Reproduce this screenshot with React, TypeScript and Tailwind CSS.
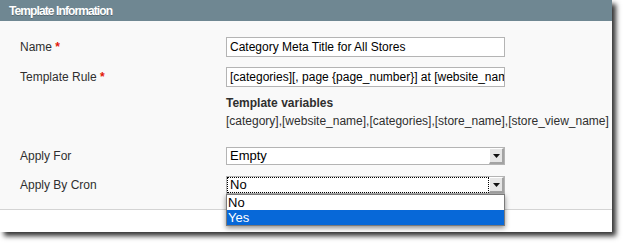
const Label = ({ text, required }: { text: string; required?: boolean }) => (
  <div className="w-[206px] shrink-0 text-[12px] text-[#2f2f2f]">
    {text}
    {required && <span className="font-bold text-[#e3170a]"> *</span>}
  </div>
);

const Arrow = () => (
  <div className="flex h-full w-[15px] shrink-0 items-center justify-center border-r-2 border-b-2 border-[#a3a3a3] bg-[#e6e6e6] border-l border-l-white border-t border-t-white">
    <svg width="7" height="4" viewBox="0 0 7 4">
      <path d="M0 0h7L3.5 4z" fill="#111" />
    </svg>
  </div>
);

const Select = ({ value, focused }: { value: string; focused?: boolean }) => (
  <div className="flex h-[18px] w-[279px] border border-[#b4b4b4] bg-white">
    <div
      className={
        focused
          ? "flex flex-1 items-center pl-[3px] text-[13px] text-black outline-1 outline-dotted outline-black -outline-offset-1"
          : "flex flex-1 items-center pl-[3px] text-[13px] text-black"
      }
    >
      {value}
    </div>
    <Arrow />
  </div>
);

const App = () => {
  return (
    <div className="h-[244px] w-[623px] bg-white font-['Liberation_Sans',Arial,sans-serif]">
      <div className="relative w-[612px] shadow-[4px_4px_5px_rgba(0,0,0,0.8)]">
        <div className="flex h-[21px] items-center bg-[#6f8792] pl-[9px] text-[12px] font-bold tracking-[-0.9px] text-white [text-shadow:0_1px_0_rgba(0,0,0,0.25)]">
          Template Information
        </div>
        <div className="flex flex-col border-b border-[#d4d4d4] bg-[#f9f9f9] pb-[15px] pl-[20px] pt-[16px]">
          <div className="flex h-[20px] items-center">
            <Label text="Name" required />
            <div className="flex h-[20px] w-[279px] items-center border border-[#b4b4b4] bg-white pl-[3px] text-[12px] text-black">
              Category Meta Title for All Stores
            </div>
          </div>
          <div className="mt-[10px] flex h-[20px] items-center">
            <Label text="Template Rule" required />
            <div className="flex h-[20px] w-[279px] items-center overflow-hidden whitespace-nowrap border border-[#b4b4b4] bg-white pl-[3px] text-[12px] text-black">
              [categories][, page {"{page_number}"}] at [website_name]
            </div>
          </div>
          <div className="mt-[9px] pl-[206px] text-[12px] font-bold leading-[14px] text-[#2f2f2f]">
            Template variables
          </div>
          <div className="mt-[4px] pl-[206px] text-[12px] leading-[14px] text-[#2f2f2f]">
            [category],[website_name],[categories],[store_name],[store_view_name]
          </div>
          <div className="mt-[19px] flex h-[18px] items-center">
            <Label text="Apply For" />
            <Select value="Empty" />
          </div>
          <div className="mt-[11px] flex h-[18px] items-center">
            <Label text="Apply By Cron" />
            <div className="relative">
              <Select value="No" focused />
              <div className="absolute left-0 top-full z-10 w-[279px] border border-[#7a7a7a] bg-white text-[13px] leading-[15px] shadow-[0_2px_5px_rgba(0,0,0,0.45)]">
                <div className="pl-[1px] text-black">No</div>
                <div className="bg-[#0768d8] pl-[1px] text-white">Yes</div>
              </div>
            </div>
          </div>
        </div>
        <div className="h-[22px] bg-white" />
      </div>
    </div>
  );
};

export default App;
